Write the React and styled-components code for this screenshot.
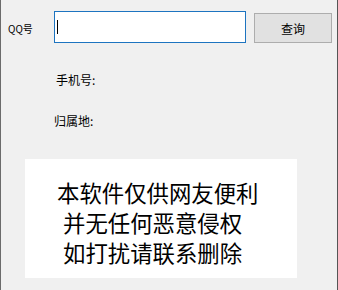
import React from "react";
import styled, { createGlobalStyle } from "styled-components";

const GlobalStyle = createGlobalStyle`
  html, body {
    margin: 0;
    padding: 0;
    background: #f0f0f0;
  }
`;

const Window = styled.div`
  box-sizing: border-box;
  width: 338px;
  height: 290px;
  background: #f0f0f0;
  border-left: 1px solid #6b6b6b;
  border-right: 1px solid #555555;
  font-family: "Noto Sans CJK SC", "Noto Sans", sans-serif;
  color: #000;
  display: flex;
  flex-direction: column;
`;

const TopRow = styled.div`
  display: flex;
  align-items: flex-end;
  padding: 11px 0 0 7px;
`;

const QQLabel = styled.span`
  width: 46px;
  font-size: 10px;
  line-height: 12px;
  align-self: center;
  margin-top: 3px;
`;

const Field = styled.div`
  box-sizing: border-box;
  width: 192px;
  height: 32px;
  background: #fff;
  border: 1px solid #1d74c0;
  display: flex;
  align-items: center;
  padding-left: 2px;
`;

const Caret = styled.span`
  width: 1px;
  height: 14px;
  background: #000;
`;

const QueryButton = styled.button`
  box-sizing: border-box;
  width: 78px;
  height: 30px;
  margin-left: 8px;
  background: #e1e1e1;
  border: 1px solid #adadad;
  border-radius: 0;
  font-family: "Noto Sans CJK SC", sans-serif;
  font-size: 12px;
  color: #000;
  padding: 0;
`;

const InfoRow = styled.div`
  font-size: 12px;
  line-height: 16px;
  padding-left: ${(p) => p.$left}px;
  margin-top: ${(p) => p.$top}px;
`;

const Notice = styled.div`
  box-sizing: border-box;
  width: 272px;
  height: 119px;
  margin: 30px 0 0 24px;
  background: #fff;
  padding: 18px 0 0 32px;
`;

const NoticeLine = styled.div`
  font-size: 22.4px;
  line-height: 30px;
  white-space: nowrap;
  padding-left: ${(p) => p.$indent || 0}px;
`;

export default function App() {
  return (
    <>
      <GlobalStyle />
      <Window>
        <TopRow>
          <QQLabel>QQ号</QQLabel>
          <Field>
            <Caret />
          </Field>
          <QueryButton>查询</QueryButton>
        </TopRow>
        <InfoRow $left={55} $top={29}>手机号:</InfoRow>
        <InfoRow $left={53} $top={25}>归属地:</InfoRow>
        <Notice>
          <NoticeLine>本软件仅供网友便利</NoticeLine>
          <NoticeLine $indent={6}>并无任何恶意侵权</NoticeLine>
          <NoticeLine $indent={6}>如打扰请联系删除</NoticeLine>
        </Notice>
      </Window>
    </>
  );
}
